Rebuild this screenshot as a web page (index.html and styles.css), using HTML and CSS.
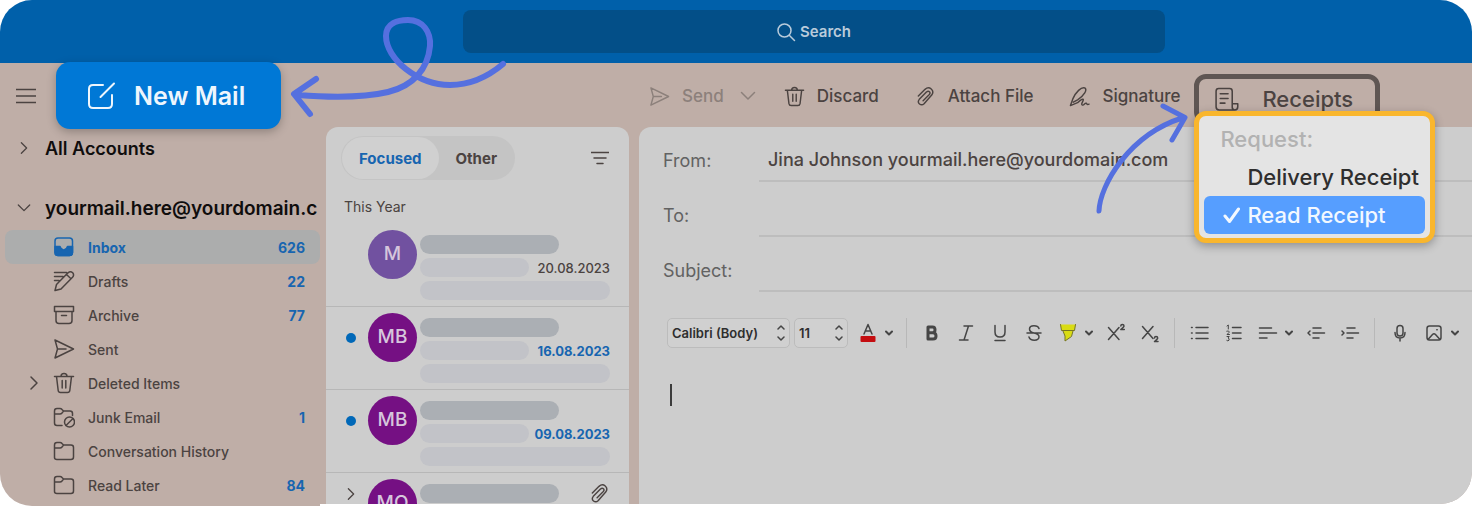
FILE: index.html
```html
<!DOCTYPE html>
<html lang="en">
<head>
  <meta charset="UTF-8">
  <title>Mail</title>
  <link rel="stylesheet" href="styles.css">
</head>
<body>
  <!-- shared icons -->
  <svg class="sprite">
    <symbol id="send" viewBox="0 0 22 22"><path d="M2 2 L20.500 11 L2 20 L4.500 11 Z M4.500 11 H13"/></symbol>
    <symbol id="trash" viewBox="0 0 22 22"><path d="M1.500 4.500 H20.500 M3.500 4.500 L5.200 18.500 Q5.500 20.500 7.500 20.500 H14.500 Q16.500 20.500 16.800 18.500 L18.500 4.500 M8 4.500 Q8 1.500 11 1.500 Q14 1.500 14 4.500 M9.200 8.500 V16 M12.800 8.500 V16"/></symbol>
    <symbol id="clip" viewBox="0 0 22 22"><path d="M3.500 10.500 L10.500 3.500 C15 -0.500 21 4.500 17.500 9.500 L9.500 18.500 C6.500 21.500 1.500 17.800 4.500 14 L12 6.300 C14.500 4.300 16.800 7 15 9 L8.500 15.500"/></symbol>
    <symbol id="folder" viewBox="0 0 22 22"><path d="M1.500 17.500 V5 Q1.500 2.500 4 2.500 H7 Q8.200 2.500 9 3.500 L10.500 5 H18 Q20.500 5 20.500 7.500 V17 Q20.500 19.500 18 19.500 H4 Q1.500 19.500 1.500 17.500 Z M1.500 8 H7 Q8.200 8 9 7 L10.500 5"/></symbol>
    <symbol id="right" viewBox="0 0 16 16"><path d="M5 2 L11 8 L5 14"/></symbol>
    <symbol id="down" viewBox="0 0 16 16"><path d="M1.500 4.500 L8 11 L14.500 4.500"/></symbol>
    <symbol id="caret-down" viewBox="0 0 8 8"><path d="M1 2.500 L4 5.500 L7 2.500"/></symbol>
    <symbol id="updown" viewBox="0 0 8 18"><path d="M1 5 L4 2 L7 5 M1 13 L4 16 L7 13"/></symbol>
  </svg>

  <div class="app">
    <header class="header">
      <label class="search">
        <svg viewBox="0 0 20 20"><circle cx="8.500" cy="8.500" r="6.500"/><path d="M13.500 13.500 L18.500 18.500"/></svg>
        <input type="text" placeholder="Search" aria-label="Search">
      </label>
    </header>

    <div class="workspace">
      <aside class="sidebar">
        <div class="sidebar-top">
          <button class="menu-btn" aria-label="Menu">
            <svg viewBox="0 0 20 16"><path d="M0 1.500 H20 M0 8 H20 M0 14.500 H20"/></svg>
          </button>
          <button class="new-mail">
            <svg viewBox="0 0 30 30"><path d="M17 4 H7 Q3 4 3 8 V23 Q3 27 7 27 H22 Q26 27 26 23 V14 M14.500 16 L28 2.500"/></svg>
            New Mail
          </button>
        </div>
        <button class="account all"><svg><use href="#right"/></svg>All Accounts</button>
        <button class="account"><svg><use href="#down"/></svg>yourmail.here@yourdomain.c</button>
        <nav class="folders">
          <a href="#" class="folder active">
            <svg class="icon" viewBox="0 0 22 22"><rect x="2" y="2" width="17.500" height="17.500" rx="3"/><path class="fill" d="M2 10.500 H7 Q8 14 10.750 14 Q13.500 14 14.500 10.500 H19.500 V16.500 Q19.500 19.500 16.500 19.500 H5 Q2 19.500 2 16.500 Z"/></svg>
            <span class="name">Inbox</span><span class="count">626</span>
          </a>
          <a href="#" class="folder">
            <svg class="icon" viewBox="0 0 22 22"><path d="M1.500 2.500 H13.500 M1.500 6.500 H10 M1.500 10.500 H6 M2 20.500 L3.500 14.500 L15 2.800 Q17.500 0.800 19.700 2.800 Q21.500 5 19.500 7.200 L8 19 Z M13.500 4.500 L18 8.800"/></svg>
            <span class="name">Drafts</span><span class="count">22</span>
          </a>
          <a href="#" class="folder">
            <svg class="icon" viewBox="0 0 22 22"><path d="M1.500 2.500 H20.500 V7.500 H1.500 Z M3 7.500 V16.500 Q3 19.500 6 19.500 H16 Q19 19.500 19 16.500 V7.500 M8.500 11.500 H13.500"/></svg>
            <span class="name">Archive</span><span class="count">77</span>
          </a>
          <a href="#" class="folder">
            <svg class="icon"><use href="#send"/></svg>
            <span class="name">Sent</span>
          </a>
          <a href="#" class="folder">
            <svg class="expand"><use href="#right"/></svg>
            <svg class="icon"><use href="#trash"/></svg>
            <span class="name">Deleted Items</span>
          </a>
          <a href="#" class="folder">
            <svg class="icon" viewBox="0 0 22 22"><path d="M9 19.500 H4 Q1.500 19.500 1.500 17 V5 Q1.500 2.500 4 2.500 H7 Q8.200 2.500 9 3.500 L10.500 5 H17 Q19.500 5 19.500 7.500 V9.500 M1.500 8 H7 Q8.200 8 9 7 L10.500 5"/><circle cx="16.500" cy="16" r="5"/><path d="M13 19.500 L20 12.500"/></svg>
            <span class="name">Junk Email</span><span class="count">1</span>
          </a>
          <a href="#" class="folder">
            <svg class="icon"><use href="#folder"/></svg>
            <span class="name">Conversation History</span>
          </a>
          <a href="#" class="folder">
            <svg class="icon"><use href="#folder"/></svg>
            <span class="name">Read Later</span><span class="count">84</span>
          </a>
        </nav>
      </aside>

      <main class="main">
        <div class="toolbar">
          <button class="tool send" disabled><svg><use href="#send"/></svg>Send</button>
          <button class="tool-more" aria-label="Send options"><svg><use href="#down"/></svg></button>
          <button class="tool"><svg><use href="#trash"/></svg>Discard</button>
          <button class="tool"><svg><use href="#clip"/></svg>Attach File</button>
          <button class="tool"><svg viewBox="0 0 22 22"><path d="M1.500 20.500 L4 13.500 C7 6.500 13 0.500 16.500 2 C19.500 4 16 10 9 14.500 L4.500 17 M1.500 20.500 L9 17.500 C13 13.500 15 13 15 14.500 C15 16 12 19.500 14 20 C16 20.500 16.500 17.500 18 18 C19 18.500 18.500 20 21 19"/></svg>Signature</button>
          <div class="receipts">
            <button class="receipts-btn">
              <svg viewBox="0 0 24 24"><path d="M15 22 H5 Q2 22 2 19 V4 Q2 1.500 4.500 1.500 H15 Q17.500 1.500 17.500 4 V19.500 Q17.500 22 20 22 Q22.800 22 22.800 19 V16 H17.500 M14.500 22 H20 M6 6.500 H13.500 M6 11 H13.500 M6 15.500 H10.500"/></svg>
              Receipts
            </button>
            <div class="receipts-menu">
              <div class="menu-title">Request:</div>
              <button class="menu-item">Delivery Receipt</button>
              <button class="menu-item checked"><svg viewBox="0 0 18 18"><path d="M2 10 L6.500 15.500 L15.500 3"/></svg>Read Receipt</button>
            </div>
            <svg class="arrow-receipts" viewBox="0 0 100 120"><path d="M5 111 C6 85 35 35 88 18 M69 6 L91 17.500 L78 40"/></svg>
          </div>
        </div>

        <div class="panels">
          <section class="list">
            <div class="list-head">
              <div class="tabs">
                <button class="tab selected">Focused</button>
                <button class="tab">Other</button>
              </div>
              <button class="filter" aria-label="Filter"><svg viewBox="0 0 18 14"><path d="M0 1.500 H18 M3 7 H15 M6 12.500 H12"/></svg></button>
            </div>
            <div class="group">This Year</div>
            <article class="mail">
              <div class="mark"></div>
              <div class="avatar light">M</div>
              <div class="lines">
                <div class="bar dark"></div>
                <div class="line"><div class="bar"></div><time>20.08.2023</time></div>
                <div class="bar long"></div>
              </div>
            </article>
            <article class="mail unread">
              <div class="mark"><span class="dot"></span></div>
              <div class="avatar">MB</div>
              <div class="lines">
                <div class="bar dark"></div>
                <div class="line"><div class="bar"></div><time>16.08.2023</time></div>
                <div class="bar long"></div>
              </div>
            </article>
            <article class="mail unread">
              <div class="mark"><span class="dot"></span></div>
              <div class="avatar">MB</div>
              <div class="lines">
                <div class="bar dark"></div>
                <div class="line"><div class="bar"></div><time>09.08.2023</time></div>
                <div class="bar long"></div>
              </div>
            </article>
            <article class="mail">
              <div class="mark"><svg><use href="#right"/></svg></div>
              <div class="avatar">MO</div>
              <div class="lines">
                <div class="line"><div class="bar dark"></div><svg class="attached"><use href="#clip"/></svg></div>
              </div>
            </article>
          </section>

          <section class="compose">
            <div class="field">
              <label for="from">From:</label>
              <input type="text" id="from" value="Jina Johnson yourmail.here@yourdomain.com">
            </div>
            <div class="field">
              <label for="to">To:</label>
              <input type="text" id="to">
            </div>
            <div class="field">
              <label for="subject">Subject:</label>
              <input type="text" id="subject">
            </div>

            <div class="format">
              <div class="picker font">
                <select aria-label="Font"><option>Calibri (Body)</option></select>
                <svg><use href="#updown"/></svg>
              </div>
              <div class="picker size">
                <select aria-label="Font size"><option>11</option></select>
                <svg><use href="#updown"/></svg>
              </div>
              <button class="fmt" aria-label="Font color"><svg viewBox="0 0 20 20"><path d="M6 11 L10 1.500 L14 11 M7.200 8 H12.800"/><rect class="red" x="2.500" y="13" width="15" height="6" rx="1"/></svg></button>
              <button class="more" aria-label="More colors"><svg><use href="#caret-down"/></svg></button>
              <span class="sep"></span>
              <button class="fmt" aria-label="Bold"><svg class="bold" viewBox="0 0 20 20"><path d="M6 4 V16 H11 Q14 16 14 13 Q14 9.800 11 9.800 H6 M6 4 H10.500 Q13 4 13 6.800 Q13 9.800 10.500 9.800"/></svg></button>
              <button class="fmt" aria-label="Italic"><svg viewBox="0 0 20 20"><path d="M8 3 H16.500 M3.500 17 H12 M12.500 3 L8 17"/></svg></button>
              <button class="fmt" aria-label="Underline"><svg viewBox="0 0 20 20"><path d="M5 2.500 V9 Q5 14 10 14 Q15 14 15 9 V2.500 M5 17.500 H15"/></svg></button>
              <button class="fmt" aria-label="Strikethrough"><svg viewBox="0 0 20 20"><path d="M15 5.500 Q14 2.800 10 2.800 Q5.500 2.800 5.500 6 Q5.500 9 10 10 Q15 11 15 13.800 Q15 17.200 10.300 17.200 Q6 17.200 5 14 M3 10 H17"/></svg></button>
              <button class="fmt" aria-label="Highlight"><svg viewBox="0 0 20 20"><path class="yellow" d="M2.500 1.500 H17.500 L16.500 7 H3.500 Z M5 7 H15 L13.500 13 L7 18 V13 Z"/><path class="outline" d="M2.500 1.500 L3.500 7.500 H16.500 L17.500 1.500 M5 8 L7 13 V18 L13.500 13.500 L15 8"/></svg></button>
              <button class="more" aria-label="More highlights"><svg><use href="#caret-down"/></svg></button>
              <button class="fmt" aria-label="Superscript"><svg viewBox="0 0 20 20"><path d="M2.500 4.500 L13 16.500 M13 4.500 L2.500 16.500 M14.800 3 Q14.800 1.500 16.300 1.500 Q18 1.500 18 3 Q18 4 14.800 6.500 H18.300"/></svg></button>
              <button class="fmt" aria-label="Subscript"><svg viewBox="0 0 20 20"><path d="M2.500 3.500 L13 15.500 M13 3.500 L2.500 15.500 M14.500 15 Q14.500 13.500 16 13.500 Q17.700 13.500 17.700 15 Q17.700 16 14.500 18.500 H18"/></svg></button>
              <span class="sep"></span>
              <button class="fmt" aria-label="Bullets"><svg viewBox="0 0 20 20"><path d="M6 4.500 H18 M6 10 H18 M6 15.500 H18 M1.500 4.500 H2.200 M1.500 10 H2.200 M1.500 15.500 H2.200"/></svg></button>
              <button class="fmt" aria-label="Numbering"><svg viewBox="0 0 20 20"><path d="M8.500 4.500 H17 M8.500 10 H17 M8.500 15.500 H17"/><path class="thin" d="M3 3 L4.300 2 V6 M2.800 8.200 Q5.800 7.500 5 9.500 L3 11.500 H5.500 M3 13.500 H5.200 L4 15 Q5.800 15.500 5 17.200 Q4 18.500 2.800 17.500"/></svg></button>
              <button class="fmt" aria-label="Align"><svg viewBox="0 0 20 20"><path d="M1.500 5 H13.500 M1.500 10 H18.500 M1.500 15 H9"/></svg></button>
              <button class="more" aria-label="More alignment"><svg><use href="#caret-down"/></svg></button>
              <button class="fmt" aria-label="Decrease indent"><svg viewBox="0 0 20 20"><path d="M7 5 H15 M7 10 H18.500 M7 15 H13 M4 8 L2 10 L4 12"/></svg></button>
              <button class="fmt" aria-label="Increase indent"><svg viewBox="0 0 20 20"><path d="M7 5 H15 M7 10 H18.500 M7 15 H13 M2 8 L4 10 L2 12"/></svg></button>
              <span class="sep"></span>
              <button class="fmt" aria-label="Dictate"><svg viewBox="0 0 20 20"><rect x="7" y="2.500" width="6" height="10.500" rx="3"/><path d="M5 9.500 Q5 15 10 15 Q15 15 15 9.500 M10 15 V18"/></svg></button>
              <button class="fmt" aria-label="Picture"><svg viewBox="0 0 20 20"><rect x="3" y="3" width="14" height="14" rx="2.500"/><path d="M4 16.500 L8.500 11.500 Q10 10 11.500 11.500 L16 16.500 M12.800 6.800 H13.200"/></svg></button>
              <button class="more" aria-label="More pictures"><svg><use href="#caret-down"/></svg></button>
            </div>

            <div class="message">
              <span class="cursor"></span>
              <textarea aria-label="Message"></textarea>
            </div>
          </section>
        </div>
      </main>
    </div>

    <svg class="arrow-new" viewBox="0 0 224 106"><path d="M215 50 C196 66 178 71 162 71 C130 71 98 45 98 22 C98 9 110 6 120 6 C135 6 143 18 142 32 C140 55 125 72 100 78 C70 85 35 83 10 81 M28 65 L6 80 L22 100"/></svg>
  </div>
</body>
</html>
```
FILE: styles.css
```css
* {
  box-sizing: border-box;
}
body {
  margin: 0;
  background-color: #fff;
  font-family: Inter, "Liberation Sans", sans-serif;
  color: #4b4341;
}
button,
input,
select,
textarea {
  margin: 0;
  padding: 0;
  border: none;
  outline: none;
  background: none;
  color: inherit;
  font: inherit;
}
svg {
  flex: none;
  fill: none;
  stroke: currentColor;
  stroke-width: 1.5;
  stroke-linecap: round;
  stroke-linejoin: round;
}
.sprite {
  position: absolute;
  width: 0;
  height: 0;
}
.app {
  position: relative;
  display: flex;
  flex-direction: column;
  height: 100vh;
  border-radius: 32px;
  overflow: hidden;
}

/* header */
.header {
  flex: none;
  height: 63px;
  padding: 10px 307px 10px 463px;
  background-color: #0060aa;
}
.search {
  display: flex;
  align-items: center;
  justify-content: center;
  gap: 4px;
  height: 43px;
  border-radius: 8px;
  background-color: #034f88;
  color: #b9cbdb;
}
.search svg {
  width: 20px;
  height: 20px;
}
.search input {
  width: 52px;
  font-size: 15px;
  font-weight: 600;
}
.search input::placeholder {
  color: #b9cbdb;
}

/* sidebar */
.workspace {
  display: flex;
  flex: 1;
  min-height: 0;
}
.sidebar {
  flex: none;
  width: 320px;
  background-color: #bfaea7;
}
.sidebar-top {
  display: flex;
  align-items: center;
  gap: 20px;
  margin-top: -1px;
  padding-left: 16px;
}
.menu-btn svg {
  display: block;
  width: 20px;
  height: 16px;
}
.new-mail {
  display: flex;
  align-items: center;
  gap: 18px;
  width: 225px;
  height: 67px;
  padding-left: 30px;
  border-radius: 14px;
  background-color: #0078d6;
  box-shadow: 0 3px 10px rgba(0,0,0,.25);
  color: #eef6fd;
  font-size: 25px;
  font-weight: 600;
}
.new-mail svg {
  width: 30px;
  height: 30px;
  stroke-width: 2;
}
.account {
  display: flex;
  align-items: center;
  gap: 14px;
  height: 34px;
  margin-top: 26px;
  padding-left: 17px;
  color: #0f0d0d;
  font-size: 19px;
  font-weight: 600;
}
.account.all {
  margin-top: 2px;
  font-size: 18px;
}
.account svg {
  width: 14px;
  height: 14px;
  color: #4b4341;
}
.folders {
  margin-top: 5px;
  padding-left: 5px;
}
.folder {
  display: flex;
  align-items: center;
  height: 34px;
  padding: 0 15px 0 48px;
  border-radius: 8px;
  color: inherit;
  font-size: 14px;
  font-weight: 500;
  text-decoration: none;
}
.folder .icon {
  width: 22px;
  height: 22px;
}
.folder .expand {
  width: 16px;
  height: 16px;
  margin-left: -27px;
  margin-right: 11px;
}
.folder .name {
  flex: 1;
  margin-left: 13px;
}
.folder .count {
  color: #1765b0;
  font-weight: 700;
}
.folder.active {
  background-color: #acadad;
  color: #1765b0;
  font-weight: 700;
}
.folder .fill {
  fill: currentColor;
}

/* toolbar */
.main {
  display: flex;
  flex: 1;
  flex-direction: column;
  min-width: 0;
  margin-bottom: 2px;
  border-bottom-right-radius: 32px;
  background-color: #bfaea7;
  overflow: hidden;
}
.toolbar {
  display: flex;
  align-items: center;
  flex: none;
  gap: 36px;
  height: 64px;
  padding: 2px 0 0 329px;
  font-size: 17px;
  font-weight: 500;
}
.tool {
  display: flex;
  align-items: center;
  gap: 12px;
  white-space: nowrap;
}
.tool svg {
  width: 21px;
  height: 21px;
}
.tool.send,
.tool-more {
  color: #8c807b;
}
.tool-more {
  margin: 0 -8px 0 -20px;
}
.tool-more svg {
  display: block;
  width: 16px;
  height: 16px;
}
.receipts {
  position: relative;
  z-index: 1;
  align-self: flex-start;
  margin: 9px 0 0 -22px;
  font-size: 22px;
}
.receipts-btn {
  display: flex;
  align-items: center;
  gap: 23px;
  width: 186px;
  height: 50px;
  padding-left: 15px;
  border: 5px solid #5f5653;
  border-radius: 12px;
}
.receipts-btn svg {
  width: 25px;
  height: 25px;
}
.receipts-menu {
  position: absolute;
  top: 37px;
  left: 0;
  width: 241px;
  padding: 4px 5px;
  border: 5px solid #f9b62d;
  border-radius: 12px;
  background-color: #e4e4e4;
  box-shadow: 0 3px 10px rgba(0,0,0,.3);
}
.menu-title {
  padding-left: 16px;
  line-height: 38px;
  color: #b2b2b2;
}
.menu-item {
  display: flex;
  align-items: center;
  width: 100%;
  height: 38px;
  padding-left: 43px;
  border-radius: 6px;
  color: #2e2e2e;
  white-space: nowrap;
}
.menu-item.checked {
  gap: 6px;
  padding-left: 19px;
  background-color: #569eff;
  color: #f2f8ff;
}
.menu-item svg {
  width: 18px;
  height: 18px;
  stroke-width: 3;
}
.arrow-receipts {
  position: absolute;
  top: 26px;
  left: -100px;
  width: 100px;
  height: 120px;
  color: #5570df;
  stroke-width: 5;
  pointer-events: none;
}
.arrow-new {
  position: absolute;
  top: 14px;
  left: 288px;
  width: 224px;
  height: 106px;
  color: #5570df;
  stroke-width: 6;
  pointer-events: none;
}

/* message list */
.panels {
  display: flex;
  flex: 1;
  gap: 10px;
  min-height: 0;
  padding-left: 6px;
}
.list {
  flex: none;
  width: 303px;
  border-radius: 12px 12px 0 0;
  background-color: #cdcdcd;
  overflow: hidden;
}
.list-head {
  display: flex;
  align-items: center;
  justify-content: space-between;
  padding: 9px 20px 0 15px;
}
.tabs {
  display: flex;
  padding: 1px;
  border-radius: 22px;
  background-color: #c4c4c4;
}
.tab {
  height: 42px;
  padding: 0 17px;
  border-radius: 21px;
  font-size: 15px;
  font-weight: 700;
}
.tab.selected {
  background-color: #d0d0d0;
  color: #1765b0;
}
.filter svg {
  display: block;
  width: 18px;
  height: 14px;
}
.group {
  padding: 17px 18px 7px;
  font-size: 14px;
  line-height: 20px;
}
.mail {
  display: flex;
  height: 83px;
  padding: 6px 19px 0 18px;
  border-bottom: 1px solid #b7b7b7;
}
.mark {
  display: flex;
  align-items: center;
  width: 14px;
  height: 49px;
  margin-right: 10px;
}
.mark svg {
  width: 14px;
  height: 16px;
  margin-top: -20px;
}
.dot {
  width: 10px;
  height: 10px;
  margin: 0 auto;
  border-radius: 50%;
  background-color: #0068b8;
}
.avatar {
  flex: none;
  width: 49px;
  height: 49px;
  border-radius: 50%;
  background-color: #751083;
  color: #d6c6dc;
  font-size: 19px;
  font-weight: 500;
  line-height: 47px;
  text-align: center;
}
.avatar.light {
  background-color: #7151a0;
}
.lines {
  display: flex;
  flex: 1;
  flex-direction: column;
  gap: 4px;
  margin: 5px 0 0 3px;
}
.line {
  display: flex;
  align-items: center;
  justify-content: space-between;
  height: 19px;
}
.bar {
  width: 109px;
  height: 19px;
  border-radius: 10px;
  background-color: #c2c3c8;
}
.bar.dark {
  width: 139px;
  background-color: #abafb4;
}
.bar.long {
  width: auto;
}
.mail time {
  font-size: 13px;
  font-weight: 500;
}
.mail.unread time {
  color: #1765b0;
  font-weight: 700;
}
.attached {
  width: 21px;
  height: 21px;
}

/* compose */
.compose {
  display: flex;
  flex: 1;
  flex-direction: column;
  min-width: 0;
  border-radius: 12px 0 0 0;
  background-color: #cdcdcd;
}
.field {
  display: flex;
  padding-left: 24px;
  font-size: 18px;
}
.field label {
  width: 96px;
  padding-top: 23px;
  line-height: 22px;
  color: #626262;
}
.field input {
  flex: 1;
  min-width: 0;
  height: 55px;
  padding: 22px 9px 10px;
  border-bottom: 2px solid #bdbdbd;
  font-weight: 500;
}
.format {
  display: flex;
  align-items: center;
  margin-top: 26px;
  padding-left: 28px;
  color: #454545;
}
.picker {
  display: flex;
  align-items: center;
  height: 30px;
  margin-right: 4px;
  padding: 0 4px;
  border: 1px solid #bcbcbc;
  border-radius: 5px;
  background-color: #d0d0d0;
}
.picker.font {
  width: 123px;
}
.picker.size {
  width: 54px;
  margin-right: 3px;
}
.picker select {
  flex: 1;
  min-width: 0;
  appearance: none;
  color: #2e2e2e;
  font-size: 13px;
  font-weight: 600;
}
.picker svg {
  width: 8px;
  height: 18px;
}
.fmt {
  display: flex;
  align-items: center;
  justify-content: center;
  width: 34px;
  height: 30px;
}
.fmt svg {
  width: 20px;
  height: 20px;
}
.fmt .bold {
  stroke-width: 3;
}
.fmt .thin {
  stroke-width: 1;
}
.fmt .red {
  fill: #c40d10;
  stroke: none;
}
.fmt .yellow {
  fill: #d9dc14;
  stroke: none;
}
.fmt .outline {
  stroke: #77761f;
  stroke-width: 1;
}
.more {
  width: 14px;
  text-align: left;
}
.more svg {
  display: block;
  width: 8px;
  height: 8px;
  stroke-width: 2;
}
.sep {
  width: 1px;
  height: 30px;
  margin: 0 8px 0 7px;
  background-color: #b8b8b8;
}
.message {
  display: flex;
  flex: 1;
  padding: 36px 28px 20px 31px;
}
.cursor {
  width: 2px;
  height: 22px;
  background-color: #3c3c3c;
}
.message textarea {
  flex: 1;
  resize: none;
}
```
